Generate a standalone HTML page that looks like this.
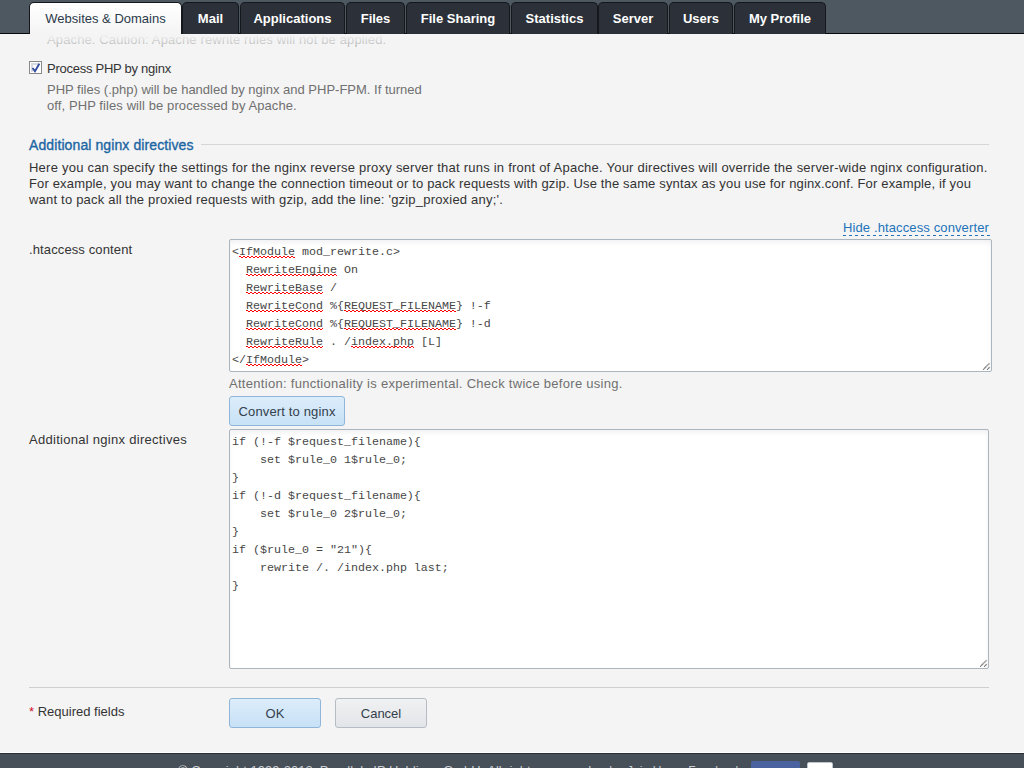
<!DOCTYPE html>
<html><head><meta charset="utf-8">
<style>
*{box-sizing:border-box}
html,body{margin:0;padding:0;width:1024px;height:768px;overflow:hidden;background:#f4f4f4;font-family:"Liberation Sans",sans-serif;font-size:13px;color:#333}
.a{position:absolute;white-space:nowrap;line-height:16px}
#hdr{position:absolute;left:0;top:0;width:1024px;height:34px;background:#4e5860;border-bottom:1px solid #08090a}
.tab{position:absolute;top:2px;height:32px;background:#2c3139;border:1px solid #14171b;border-bottom:none;border-radius:5px 5px 0 0;color:#fff;font-weight:bold;text-align:center;line-height:31px;font-size:13px}
.tab.act{background:linear-gradient(#ffffff,#f4f4f4);color:#2b3a4a;font-weight:normal;height:33px;border-color:#14171b}
.fade{position:absolute;left:0;top:34px;width:1024px;height:14px;background:linear-gradient(rgba(244,244,244,1) 0px,rgba(244,244,244,0.9) 3px,rgba(244,244,244,0.45) 14px)}
.gray{color:#707070}
.ta{position:absolute;background:#fff;border:1px solid #abb5bd;border-radius:2px;box-shadow:inset 0 3px 4px rgba(30,40,60,0.06)}
.mono{position:absolute;font-family:"Liberation Mono",monospace;font-size:11.67px;line-height:18px;white-space:pre;color:#474747}
.sp{background-image:repeating-linear-gradient(90deg,#f00 0 2px,transparent 2px 4px),repeating-linear-gradient(90deg,transparent 0 2px,#f00 2px 4px);background-size:100% 1px,100% 1px;background-repeat:no-repeat;background-position:0 11px,0 12px}
.btn{position:absolute;border-radius:3px;text-align:center;color:#34404c;line-height:30px}
</style></head><body>
<div id="hdr"></div>
<div class="tab act" style="left:29px;width:153px">Websites &amp; Domains</div>
<div class="tab" style="left:182px;width:57px">Mail</div>
<div class="tab" style="left:240px;width:105px">Applications</div>
<div class="tab" style="left:346px;width:59px">Files</div>
<div class="tab" style="left:406px;width:104px">File Sharing</div>
<div class="tab" style="left:511px;width:87px">Statistics</div>
<div class="tab" style="left:598px;width:70px">Server</div>
<div class="tab" style="left:669px;width:64px">Users</div>
<div class="tab" style="left:734px;width:92px">My Profile</div>

<div class="a gray" style="left:47px;top:32px;letter-spacing:0.13px">Apache. Caution: Apache rewrite rules will not be applied.</div>
<div class="fade"></div>

<div style="position:absolute;left:29px;top:61px;width:13px;height:13px;border:1px solid #888;background:#fff;box-shadow:inset 0 0 0 1px #fff,inset 1px 1px 0 2px #d8dbe0"></div>
<svg style="position:absolute;left:30px;top:62px" width="11" height="11" viewBox="0 0 11 11"><path d="M2.5 6 L5 9.2 L9.3 1.8" fill="none" stroke="#3550a0" stroke-width="1.9"/></svg>
<div class="a" style="left:47px;top:61px;letter-spacing:-0.26px">Process PHP by nginx</div>
<div class="a gray" style="left:47px;top:82px">PHP files (.php) will be handled by nginx and PHP-FPM. If turned</div>
<div class="a gray" style="left:47px;top:98px;letter-spacing:0.09px">off, PHP files will be processed by Apache.</div>

<div class="a" style="left:29px;top:137px;font-size:14px;color:#1b66a3;letter-spacing:0.1px;-webkit-text-stroke:0.35px #1b66a3">Additional nginx directives</div>
<div style="position:absolute;left:201px;top:144px;width:788px;height:1px;background:#d6d6d6"></div>

<div class="a" style="left:29px;top:160px;letter-spacing:0.23px">Here you can specify the settings for the nginx reverse proxy server that runs in front of Apache. Your directives will override the server-wide nginx configuration.</div>
<div class="a" style="left:29px;top:176px;letter-spacing:0.156px">For example, you may want to change the connection timeout or to pack requests with gzip. Use the same syntax as you use for nginx.conf. For example, if you</div>
<div class="a" style="left:29px;top:192px;letter-spacing:0.2px">want to pack all the proxied requests with gzip, add the line: 'gzip_proxied any;'.</div>

<div class="a" style="left:843px;top:220px;color:#2273ba;line-height:15px;letter-spacing:0.12px">Hide .htaccess converter</div>
<div style="position:absolute;left:843px;top:235px;width:147px;height:1px;background:repeating-linear-gradient(90deg,#2273ba 0 3px,transparent 3px 6px)"></div>

<div class="a" style="left:29px;top:242px;letter-spacing:0.12px">.htaccess content</div>
<div class="ta" style="left:229px;top:239px;width:763px;height:133px"></div>
<div class="mono" style="left:232px;top:243px">&lt;<span class="sp">IfModule</span> mod_rewrite.c&gt;
  <span class="sp">RewriteEngine</span> On
  <span class="sp">RewriteBase</span> /
  <span class="sp">RewriteCond</span> %{<span class="sp">REQUEST_FILENAME</span>} !-f
  <span class="sp">RewriteCond</span> %{<span class="sp">REQUEST_FILENAME</span>} !-d
  <span class="sp">RewriteRule</span> . /<span class="sp">index.php</span> [L]
&lt;/<span class="sp">IfModule</span>&gt;</div>

<svg style="position:absolute;left:981px;top:361px" width="10" height="10" viewBox="0 0 10 10"><path d="M2.2 8.6 L8.8 2.1 M6.2 8.6 L8.8 6.1" stroke="#5a5a5a" stroke-width="1.2" stroke-dasharray="1.1 0.4" fill="none"/></svg>
<div class="a gray" style="left:229px;top:376px;letter-spacing:0.29px">Attention: functionality is experimental. Check twice before using.</div>
<div class="btn" style="left:229px;top:396px;width:116px;height:30px;border:1px solid #8fb6d8;background:linear-gradient(#dcedfb,#c7e1f6);letter-spacing:0.15px">Convert to nginx</div>

<div class="a" style="left:29px;top:432px;letter-spacing:0.285px">Additional nginx directives</div>
<div class="ta" style="left:229px;top:429px;width:760px;height:240px"></div>
<div class="mono" style="left:232px;top:433px">if (!-f $request_filename){
    set $rule_0 1$rule_0;
}
if (!-d $request_filename){
    set $rule_0 2$rule_0;
}
if ($rule_0 = "21"){
    rewrite /. /index.php last;
}</div>

<svg style="position:absolute;left:978px;top:658px" width="10" height="10" viewBox="0 0 10 10"><path d="M2.2 8.6 L8.8 2.1 M6.2 8.6 L8.8 6.1" stroke="#5a5a5a" stroke-width="1.2" stroke-dasharray="1.1 0.4" fill="none"/></svg>
<div style="position:absolute;left:29px;top:687px;width:960px;height:1px;background:#cfcfcf"></div>
<div class="a" style="left:29px;top:704px"><span style="color:#d0142c">*</span> Required fields</div>
<div class="btn" style="left:229px;top:698px;width:92px;height:30px;border:1px solid #8fb6d8;background:linear-gradient(#dcedfb,#c7e1f6)">OK</div>
<div class="btn" style="left:335px;top:698px;width:92px;height:30px;border:1px solid #b5bcc3;background:linear-gradient(#f0f1f3,#e2e5e8)">Cancel</div>

<div style="position:absolute;left:0;top:752px;width:1024px;height:1px;background:#fff"></div>
<div style="position:absolute;left:0;top:753px;width:1024px;height:15px;background:#474f58;border-top:1px solid #2a2f35"></div>
<div class="a" style="left:178px;top:763px;color:#c9cdd2;font-size:13px">© Copyright 1999-2012, Parallels IP Holdings GmbH. All rights reserved.</div>
<div class="a" style="left:609px;top:763px;color:#c9cdd2;font-size:13px">|</div>
<div class="a" style="left:627px;top:763px;color:#c9cdd2;font-size:12px;letter-spacing:0.1px">Join Us on Facebook:</div>
<div style="position:absolute;left:751px;top:761px;width:49px;height:12px;background:#4a62a0;border-radius:2px"></div>
<div class="a" style="left:776px;top:764px;color:#fff;font-size:11px;font-weight:bold">Like</div>
<div style="position:absolute;left:807px;top:762px;width:26px;height:12px;background:#fff;border:1px solid #c0c4cc;border-radius:2px"></div>
</body></html>
